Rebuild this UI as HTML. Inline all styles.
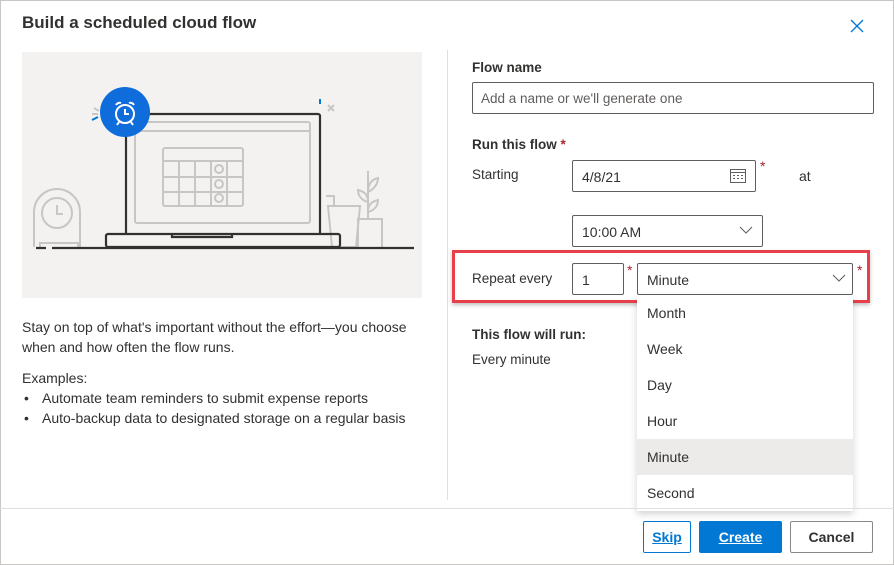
<!DOCTYPE html>
<html><head><style>
*{box-sizing:border-box;margin:0;padding:0}
body{width:894px;height:565px;background:#fff;font-family:"Liberation Sans",sans-serif;color:#323130;position:relative;overflow:hidden;font-size:14px}
.a{position:absolute}
.box{position:absolute;border:1px solid #605e5c;border-radius:2px;background:#fff}
.t{position:absolute;white-space:nowrap}
.req{color:#a4262c}
.btn{position:absolute;height:32px;border-radius:2px;font-weight:bold;font-size:14px;display:flex;align-items:center;justify-content:center}
.dd div{height:36px;line-height:36px;padding-left:10px;font-size:14px}
</style></head><body>
<div class="a" style="left:0;top:0;width:894px;height:565px;border:1px solid #c8c6c4"></div>
<div class="t" style="left:22px;top:13px;font-size:17px;font-weight:bold">Build a scheduled cloud flow</div>
<svg class="a" style="left:850px;top:19px" width="14" height="14"><path d="M1 1L13 13M13 1L1 13" stroke="#0078d4" stroke-width="1.3"/></svg>

<svg class="a" style="left:22px;top:52px" width="400" height="246">
<rect width="400" height="246" fill="#f3f2f1"/>
<g fill="none" stroke="#c8c6c4" stroke-width="2">
<path d="M12 195V160a23 23 0 0 1 46 0v35"/><circle cx="35" cy="161" r="15"/><path d="M35 153v9h6M18 195v-4h38v4"/>
<rect x="113" y="70" width="175" height="101" rx="2"/><line x1="114" y1="79" x2="287" y2="79"/>
<rect x="141" y="96" width="80" height="58" rx="2"/><path d="M141 109h80M141 125h80M141 140h80M157 109v45M173 109v45M189 109v45M205 109v45"/>
<circle cx="197" cy="117" r="4"/><circle cx="197" cy="132" r="4"/><circle cx="197" cy="146" r="4"/>
<path d="M304 144h8v10M306 154h32l-4 41h-24zM336 195v-28h24v28M346 167v-48M346 140c8-4 10-10 10-14c-8 2-10 8-10 14M346 150c-8-2-10-8-10-12c8 2 10 6 10 12M346 160c8-2 10-8 10-12c-8 2-10 6-10 12"/>
<path d="M306 53l6 6M312 53l-6 6M72 56l5 3M70 62h6"/>
</g>
<g fill="none" stroke="#323130" stroke-width="2.2">
<path d="M104 181V64a2 2 0 0 1 2-2h190a2 2 0 0 1 2 2v117"/>
<rect x="84" y="182" width="234" height="13" rx="2"/><path d="M150 182v3h60v-3"/>
<path d="M14 196h10M30 196h362"/>
</g>
<path d="M70 68l6-3M298 47v5" stroke="#0078d4" stroke-width="2"/>
<circle cx="103" cy="60" r="25" fill="#0f6cdb"/>
<g fill="none" stroke="#fff" stroke-width="2"><circle cx="103" cy="62" r="9"/><path d="M103 57v5h4M94 53a4 4 0 0 1 5-2M112 53a4 4 0 0 0-5-2M97 70l-2 3M109 70l2 3"/></g>
</svg>

<div class="t" style="left:22px;top:317px;line-height:20px;font-size:14px;white-space:normal;width:410px">Stay on top of what's important without the effort—you choose when and how often the flow runs.</div>
<div class="t" style="left:22px;top:370px;font-size:14px">Examples:</div>
<div class="t" style="left:24px;top:388px;font-size:14px;line-height:20px">•<br>•</div>
<div class="t" style="left:42px;top:388px;font-size:14px;line-height:20px">Automate team reminders to submit expense reports<br>Auto-backup data to designated storage on a regular basis</div>

<div class="a" style="left:447px;top:50px;width:1px;height:450px;background:#e1dfdd"></div>

<div class="t" style="left:472px;top:60px;font-weight:bold;font-size:13.5px">Flow name</div>
<div class="box" style="left:472px;top:82px;width:402px;height:32px"></div>
<div class="t" style="left:481px;top:91px;color:#605e5c;font-size:13.5px">Add a name or we'll generate one</div>
<div class="t" style="left:472px;top:137px;font-weight:bold;font-size:13.5px">Run this flow <span class="req">*</span></div>
<div class="t" style="left:472px;top:167px;font-size:13.5px">Starting</div>
<div class="box" style="left:572px;top:160px;width:184px;height:32px"></div>
<div class="t" style="left:582px;top:169px">4/8/21</div>
<svg class="a" style="left:729px;top:168px" width="18" height="16"><g fill="none" stroke="#605e5c"><rect x="1.5" y="1.5" width="15" height="13"/><path d="M1.5 4.5h15"/></g><g fill="#605e5c"><rect x="4" y="7" width="2" height="1"/><rect x="8" y="7" width="2" height="1"/><rect x="12" y="7" width="2" height="1"/><rect x="4" y="10" width="2" height="1"/><rect x="8" y="10" width="2" height="1"/><rect x="12" y="10" width="2" height="1"/></g></svg>
<div class="t req" style="left:760px;top:158px">*</div>
<div class="t" style="left:799px;top:168px">at</div>
<div class="box" style="left:572px;top:215px;width:191px;height:32px"></div>
<div class="t" style="left:582px;top:224px">10:00 AM</div>
<svg class="a" style="left:739px;top:226px" width="14" height="9"><path d="M1 1l6 6 6-6" fill="none" stroke="#605e5c"/></svg>

<div class="a" style="left:452px;top:250px;width:418px;height:53px;border:3px solid #e8404a;box-shadow:0 2px 4px rgba(0,0,0,.25)"></div>
<div class="t" style="left:472px;top:271px;font-size:13.5px">Repeat every</div>
<div class="box" style="left:572px;top:263px;width:52px;height:32px"></div>
<div class="t" style="left:582px;top:272px">1</div>
<div class="t req" style="left:627px;top:262px">*</div>
<div class="box" style="left:637px;top:263px;width:216px;height:32px"></div>
<div class="t" style="left:647px;top:272px">Minute</div>
<svg class="a" style="left:832px;top:274px" width="14" height="9"><path d="M1 1l6 6 6-6" fill="none" stroke="#605e5c"/></svg>
<div class="t req" style="left:857px;top:262px">*</div>

<div class="t" style="left:472px;top:327px;font-weight:bold;font-size:13.5px">This flow will run:</div>
<div class="t" style="left:472px;top:352px;font-size:13.5px">Every minute</div>

<div class="a dd" style="left:637px;top:295px;width:216px;height:216px;background:#fff;box-shadow:0 3px 7px rgba(0,0,0,.18)">
<div>Month</div><div>Week</div><div>Day</div><div>Hour</div><div style="background:#edebe9">Minute</div><div>Second</div></div>

<div class="a" style="left:0;top:508px;width:894px;height:1px;background:#e1dfdd"></div>
<div class="btn" style="left:643px;top:521px;width:48px;border:1px solid #0078d4;color:#0078d4;text-decoration:underline">Skip</div>
<div class="btn" style="left:699px;top:521px;width:83px;background:#0078d4;color:#fff;text-decoration:underline">Create</div>
<div class="btn" style="left:790px;top:521px;width:83px;border:1px solid #8a8886;color:#323130">Cancel</div>
</body></html>
